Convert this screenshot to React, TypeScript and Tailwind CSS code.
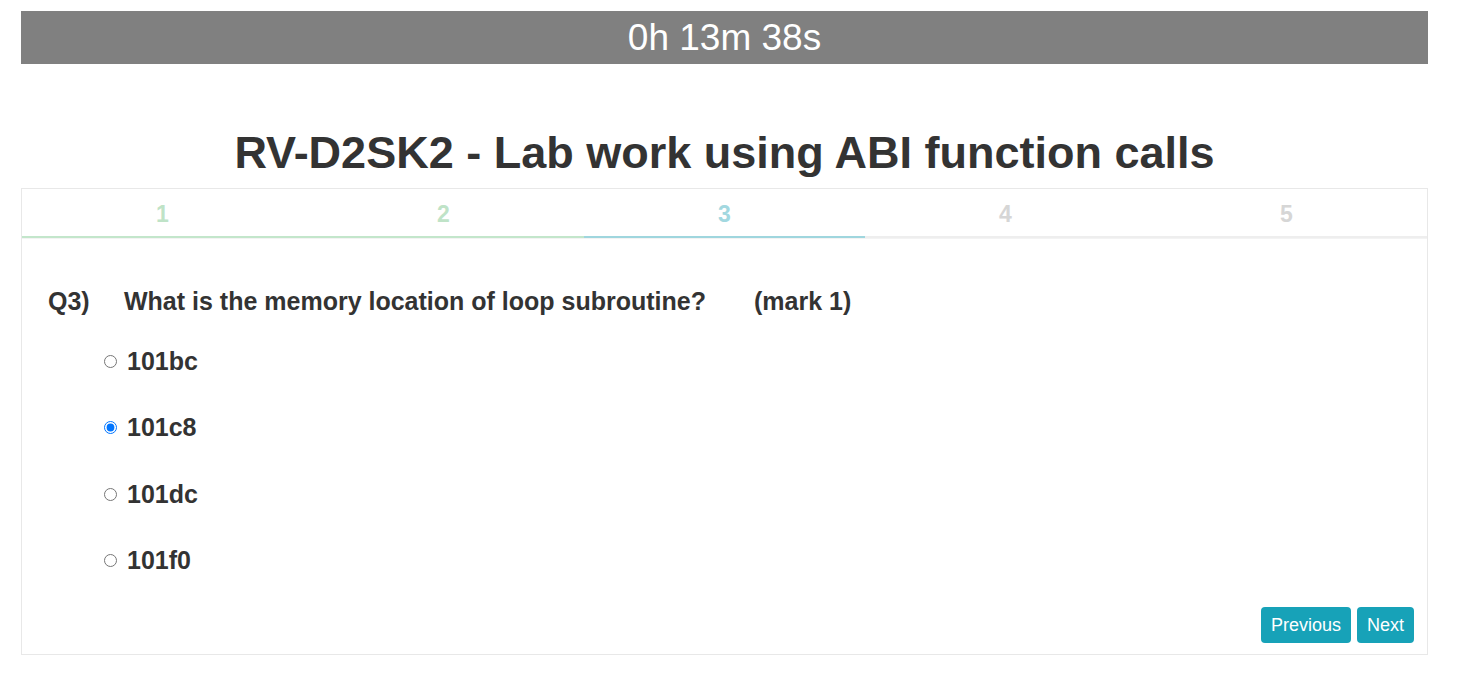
import { useState } from 'react';

const OPTIONS = ['101bc', '101c8', '101dc', '101f0'];

const TABS = [
  { n: 1, text: 'text-[#bfe3c7]', line: 'bg-[#c3e6cb]' },
  { n: 2, text: 'text-[#bfe3c7]', line: 'bg-[#c3e6cb]' },
  { n: 3, text: 'text-[#a2d8e0]', line: 'bg-[#9fd6de]' },
  { n: 4, text: 'text-[#d6d6d6]', line: 'bg-[#eeeeee]' },
  { n: 5, text: 'text-[#d6d6d6]', line: 'bg-[#eeeeee]' },
];

export default function App() {
  const [answer, setAnswer] = useState('101c8');

  return (
    <div className="min-h-[680px] bg-white pt-[11px] font-['Liberation_Sans',Arial,sans-serif] text-[#333333]">
      <div className="ml-[21px] w-[1407px]">
        {/* Timer */}
        <div className="flex h-[53px] items-center justify-center bg-[#808080] text-[37px] text-white">
          0h 13m 38s
        </div>

        {/* Title */}
        <h1 className="mt-[58px] pb-[4px] text-center text-[45px] font-bold leading-[62px]">
          RV-D2SK2 - Lab work using ABI function calls
        </h1>

        {/* Quiz card */}
        <div className="border border-[#e8e8e8] bg-white">
          <div className="grid grid-cols-5">
            {TABS.map((t) => (
              <div key={t.n} className="flex flex-col">
                <div className={`flex h-[47px] items-center justify-center pt-[4px] text-[23px] font-bold ${t.text}`}>
                  {t.n}
                </div>
                <div className={`h-[2px] ${t.line}`} />
              </div>
            ))}
          </div>
          <div className="h-px bg-[#f3f3f3]" />

          <div className="px-[26px] pt-[48px]">
            <div className="flex items-center text-[25px] font-bold leading-[28px]">
              <span className="w-[76px]">Q3)</span>
              <span className="w-[630px]">What is the memory location of loop subroutine?</span>
              <span>(mark 1)</span>
            </div>

            <div className="mt-[13px] flex flex-col pl-[56px]">
              {OPTIONS.map((opt) => (
                <label key={opt} className="flex h-[66.5px] cursor-pointer items-center gap-[10px] text-[25px] font-bold">
                  <input
                    type="radio"
                    name="q3"
                    checked={answer === opt}
                    onChange={() => setAnswer(opt)}
                    className="h-[13px] w-[13px] accent-[#0075ff]"
                  />
                  {opt}
                </label>
              ))}
            </div>
          </div>

          <div className="mt-[13px] flex justify-end gap-[6px] px-[13px] pb-[11px]">
            <button className="h-[36px] rounded-[4px] bg-[#17a2b8] px-[10px] text-[18px] text-white">
              Previous
            </button>
            <button className="h-[36px] rounded-[4px] bg-[#17a2b8] px-[10px] text-[18px] text-white">
              Next
            </button>
          </div>
        </div>
      </div>
    </div>
  );
}
